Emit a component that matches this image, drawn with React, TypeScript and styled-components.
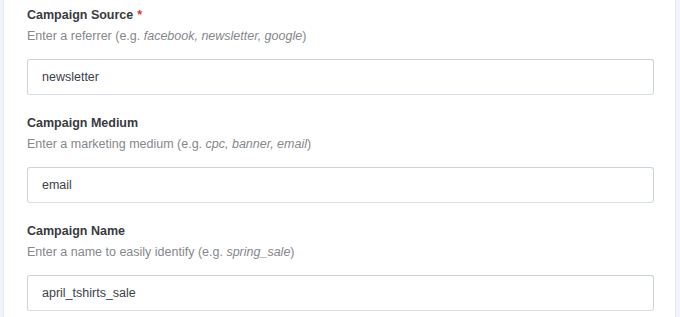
import React from "react";
import styled, { createGlobalStyle } from "styled-components";

const GlobalStyle = createGlobalStyle`
  html, body {
    margin: 0;
    padding: 0;
    background: #f1f4fa;
    font-family: "Liberation Sans", Arial, sans-serif;
  }
`;

type FieldData = {
  label: string;
  required?: boolean;
  hint: React.ReactNode;
  value: string;
};

const fields: FieldData[] = [
  {
    label: "Campaign Source",
    required: true,
    hint: (
      <>
        Enter a referrer (e.g. <em>facebook, newsletter, google</em>)
      </>
    ),
    value: "newsletter",
  },
  {
    label: "Campaign Medium",
    hint: (
      <>
        Enter a marketing medium (e.g. <em>cpc, banner, email</em>)
      </>
    ),
    value: "email",
  },
  {
    label: "Campaign Name",
    hint: (
      <>
        Enter a name to easily identify (e.g. <em>spring_sale</em>)
      </>
    ),
    value: "april_tshirts_sale",
  },
];

const App: React.FC = () => {
  return (
    <>
      <GlobalStyle />
      <Page>
        <Card>
          {fields.map((f) => (
            <Field key={f.label}>
              <Label>
                {f.label}
                {f.required && <Required>*</Required>}
              </Label>
              <Hint>{f.hint}</Hint>
              <Input type="text" defaultValue={f.value} readOnly />
            </Field>
          ))}
        </Card>
      </Page>
    </>
  );
};

const Page = styled.div`
  height: 317px;
  overflow: hidden;
  padding: 0 4px 0 3px;
`;

const Card = styled.div`
  background: #fff;
  border-left: 1px solid #e4e9f2;
  border-right: 1px solid #e4e9f2;
  min-height: 317px;
  padding: 5px 21px 0 23px;
  display: flex;
  flex-direction: column;
  gap: 18px;
`;

const Field = styled.div`
  display: flex;
  flex-direction: column;
`;

const Label = styled.div`
  font-size: 12.5px;
  line-height: 20px;
  font-weight: bold;
  color: #393b40;
`;

const Required = styled.span`
  color: #d63638;
  margin-left: 4px;
`;

const Hint = styled.div`
  margin-top: 1px;
  font-size: 12.5px;
  line-height: 20px;
  color: #85888d;

  em {
    font-style: italic;
  }
`;

const Input = styled.input`
  margin-top: 13px;
  box-sizing: border-box;
  width: 100%;
  height: 36px;
  padding: 0 14px;
  border: 1px solid #cbd3de;
  border-bottom-color: #d6dde7;
  border-radius: 3px;
  background: #fff;
  font-family: "Liberation Sans", Arial, sans-serif;
  font-size: 12.5px;
  color: #3e4249;
  outline: none;
`;

export default App;
